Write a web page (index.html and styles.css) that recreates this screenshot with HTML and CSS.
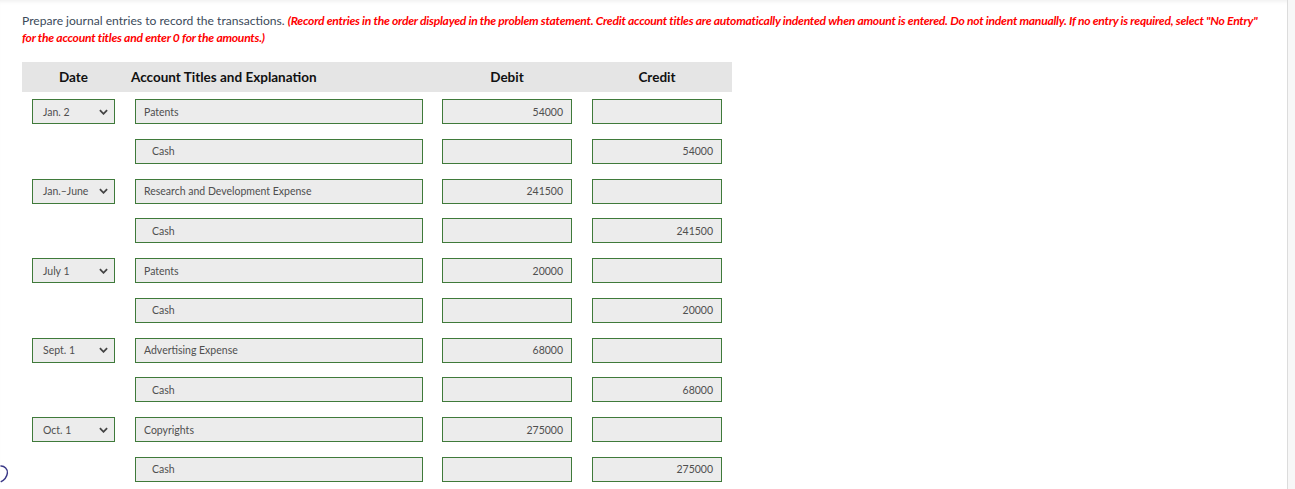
FILE: index.html
```html
<!DOCTYPE html>
<html lang="en">
<head>
<meta charset="utf-8">
<title>Journal entries</title>
<link rel="stylesheet" href="styles.css">
</head>
<body>
<div class="page">
  <main class="content">
    <p class="instructions">Prepare journal entries to record the transactions. <em class="note">(Record entries in the order displayed in the problem statement. Credit account titles are automatically indented when amount is entered. Do not indent manually. If no entry is required, select "No Entry" for the account titles and enter 0 for the amounts.)</em></p>

    <div class="journal">
      <div class="head">
        <div class="hc hc-date">Date</div>
        <div class="hc hc-acct">Account Titles and Explanation</div>
        <div class="hc hc-num">Debit</div>
        <div class="hc hc-num">Credit</div>
      </div>

      <div class="rows">
        <div class="row">
          <div class="cell"><div class="select"><span>Jan. 2</span><svg class="chev" viewBox="0 0 10 6"><path d="M1 1l4 4 4-4"/></svg></div></div>
          <div class="cell"><div class="field">Patents</div></div>
          <div class="cell"><div class="field num">54000</div></div>
          <div class="cell"><div class="field num"></div></div>
        </div>
        <div class="row">
          <div class="cell"></div>
          <div class="cell"><div class="field indent">Cash</div></div>
          <div class="cell"><div class="field num"></div></div>
          <div class="cell"><div class="field num">54000</div></div>
        </div>

        <div class="row">
          <div class="cell"><div class="select"><span>Jan.–June</span><svg class="chev" viewBox="0 0 10 6"><path d="M1 1l4 4 4-4"/></svg></div></div>
          <div class="cell"><div class="field">Research and Development Expense</div></div>
          <div class="cell"><div class="field num">241500</div></div>
          <div class="cell"><div class="field num"></div></div>
        </div>
        <div class="row">
          <div class="cell"></div>
          <div class="cell"><div class="field indent">Cash</div></div>
          <div class="cell"><div class="field num"></div></div>
          <div class="cell"><div class="field num">241500</div></div>
        </div>

        <div class="row">
          <div class="cell"><div class="select"><span>July 1</span><svg class="chev" viewBox="0 0 10 6"><path d="M1 1l4 4 4-4"/></svg></div></div>
          <div class="cell"><div class="field">Patents</div></div>
          <div class="cell"><div class="field num">20000</div></div>
          <div class="cell"><div class="field num"></div></div>
        </div>
        <div class="row">
          <div class="cell"></div>
          <div class="cell"><div class="field indent">Cash</div></div>
          <div class="cell"><div class="field num"></div></div>
          <div class="cell"><div class="field num">20000</div></div>
        </div>

        <div class="row">
          <div class="cell"><div class="select"><span>Sept. 1</span><svg class="chev" viewBox="0 0 10 6"><path d="M1 1l4 4 4-4"/></svg></div></div>
          <div class="cell"><div class="field">Advertising Expense</div></div>
          <div class="cell"><div class="field num">68000</div></div>
          <div class="cell"><div class="field num"></div></div>
        </div>
        <div class="row">
          <div class="cell"></div>
          <div class="cell"><div class="field indent">Cash</div></div>
          <div class="cell"><div class="field num"></div></div>
          <div class="cell"><div class="field num">68000</div></div>
        </div>

        <div class="row">
          <div class="cell"><div class="select"><span>Oct. 1</span><svg class="chev" viewBox="0 0 10 6"><path d="M1 1l4 4 4-4"/></svg></div></div>
          <div class="cell"><div class="field">Copyrights</div></div>
          <div class="cell"><div class="field num">275000</div></div>
          <div class="cell"><div class="field num"></div></div>
        </div>
        <div class="row">
          <div class="cell"></div>
          <div class="cell"><div class="field indent">Cash</div></div>
          <div class="cell"><div class="field num"></div></div>
          <div class="cell"><div class="field num">275000</div></div>
        </div>
      </div>
    </div>
  </main>
  <div class="gutter"></div>
  <svg class="pen" viewBox="0 0 10 20"><path d="M0.5 1.2C5 0.8 8.8 4.5 8.2 9C7.6 13.5 4.5 16.8 0.8 18.8"/></svg>
</div>
</body>
</html>
```

FILE: styles.css
```css
html, body {
  margin: 0;
  padding: 0;
  background: #ffffff;
}

body {
  font-family: Lato, "Open Sans", "Liberation Sans", sans-serif;
  color: #333;
  height: 489px;
  overflow: hidden;
}

.page {
  position: relative;
  display: flex;
  height: 489px;
  box-shadow: inset 0 4px 4px -3px rgba(0, 0, 0, 0.08);
}

.content {
  width: 1287px;
  padding: 12px 0 0 22px;
  box-sizing: border-box;
}

.gutter {
  flex: 1;
  border-left: 1px solid #dcdcdc;
  background: #f7f7f7;
}

.instructions {
  margin: 0;
  font-size: 12.1px;
  line-height: 17px;
  color: #3b4a5a;
  width: 1244px;
}

.note {
  color: #ff0000;
  font-weight: bold;
  font-style: italic;
  letter-spacing: -0.25px;
}

.journal {
  margin-top: 16px;
  width: 710px;
}

.head {
  display: grid;
  grid-template-columns: 103px 307px 150px 150px;
  height: 30px;
  background: #e5e5e5;
  align-items: center;
}

.hc {
  font-size: 13.5px;
  font-weight: bold;
  color: #111;
}

.hc-date, .hc-num {
  text-align: center;
}

.hc-acct {
  padding-left: 6px;
}

.rows {
  padding-top: 7px;
}

.row {
  display: grid;
  grid-template-columns: 103px 307px 150px 150px;
  height: 39.75px;
}

.cell {
  padding-left: 10px;
}

.select, .field {
  box-sizing: border-box;
  height: 25px;
  border: 1px solid #3f7a3a;
  background: #ececec;
  font-size: 10.5px;
  color: #4f4f4f;
  display: flex;
  align-items: center;
}

.select {
  width: 83px;
  padding: 0 6px 0 10px;
  justify-content: space-between;
}

.field {
  width: 288px;
  padding: 0 8px;
}

.field.indent {
  padding-left: 16px;
}

.field.num {
  width: 130px;
  justify-content: flex-end;
}

.chev {
  width: 9px;
  height: 6px;
  fill: none;
  stroke: #444;
  stroke-width: 2;
}

.pen {
  position: absolute;
  left: 0;
  top: 465px;
  width: 9px;
  height: 18px;
  fill: none;
  stroke: #3a3887;
  stroke-width: 1.6;
}
```
